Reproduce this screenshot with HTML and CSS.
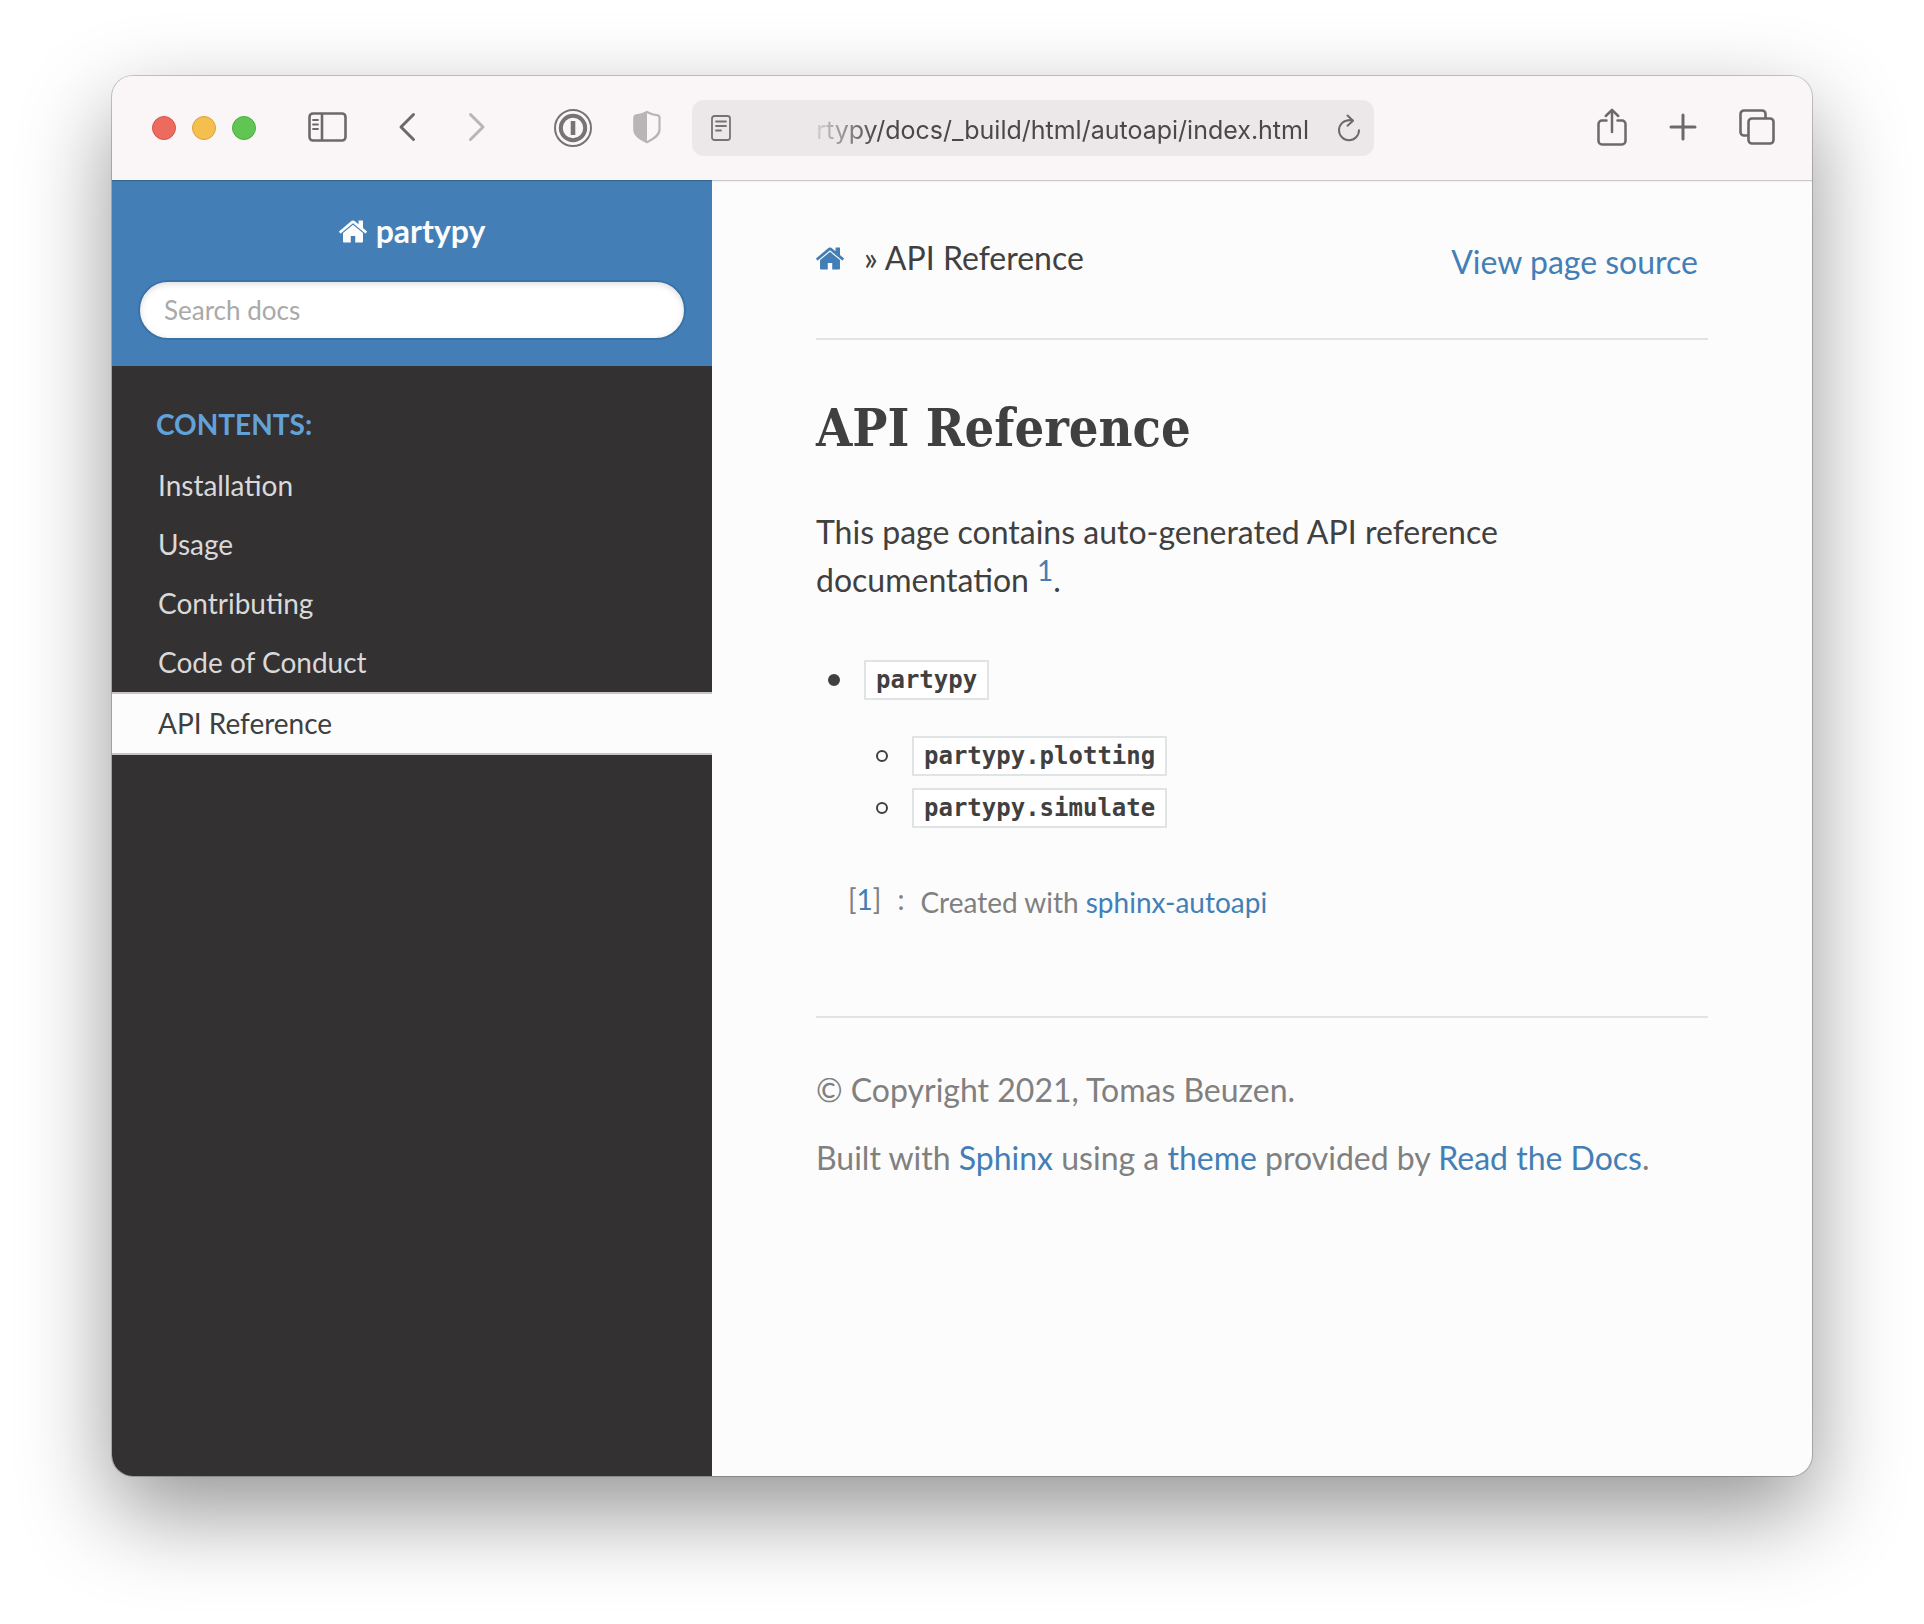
FILE: index.html
```html
<!DOCTYPE html>
<html lang="en">
<head>
<meta charset="utf-8">
<title>API Reference — partypy documentation</title>
<link rel="stylesheet" href="styles.css">
</head>
<body>
<svg class="defs" aria-hidden="true">
  <symbol id="home" viewBox="24 253 1616 1283">
    <path fill="currentColor" d="M1408 992v480q0 26-19 45t-45 19h-384v-384h-256v384h-384q-26 0-45-19t-19-45v-480q0-1 .5-3t.5-3l575-474 575 474q1 2 1 6zm223-69l-62 74q-8 9-21 11h-3q-13 0-21-7l-692-577-692 577q-12 8-24 7-13-2-21-11l-62-74q-8-10-7-23.5t11-21.5l719-599q32-26 76-26t76 26l244 204v-195q0-14 9-23t23-9h192q14 0 23 9t9 23v408l219 182q10 8 11 21.5t-7 23.5z"/>
  </symbol>
</svg>
<div class="window">
  <header class="toolbar">
    <div class="lights">
      <button class="light red" aria-label="Close"></button>
      <button class="light yellow" aria-label="Minimize"></button>
      <button class="light green" aria-label="Zoom"></button>
    </div>
    <button class="tool sidebar-toggle" aria-label="Show sidebar">
      <svg width="40" height="32" viewBox="0 0 40 32" fill="none" stroke="currentColor" stroke-width="2.6">
        <rect x="1.5" y="2.5" width="36" height="27" rx="3.5"/>
        <path d="M14 2.5v27"/>
        <path d="M5 9h5M5 13.500h5M5 18h5" stroke-width="1.8" stroke-linecap="round"/>
      </svg>
    </button>
    <div class="history">
      <button class="tool" aria-label="Back">
        <svg width="18" height="30" viewBox="0 0 18 30" fill="none" stroke="currentColor" stroke-width="3" stroke-linecap="round" stroke-linejoin="round"><path d="M15.500 2.500 3 15l12.500 12.500"/></svg>
      </button>
      <button class="tool faded" aria-label="Forward">
        <svg width="18" height="30" viewBox="0 0 18 30" fill="none" stroke="currentColor" stroke-width="3" stroke-linecap="round" stroke-linejoin="round"><path d="M2.500 2.500 15 15 2.500 27.500"/></svg>
      </button>
    </div>
    <div class="extensions">
      <button class="tool key" aria-label="Password manager">
        <svg width="38" height="38" viewBox="0 0 38 38" fill="none" stroke="currentColor">
          <circle cx="19" cy="19" r="18" stroke-width="2"/>
          <circle cx="19" cy="19" r="12.200" stroke-width="4"/>
          <path d="M19 12v14" stroke-width="4.600"/>
        </svg>
      </button>
      <button class="tool faded" aria-label="Privacy report">
        <svg width="28" height="34" viewBox="0 0 28 34">
          <path d="M14 1.800C10.500 4.200 6 4.900 3 5.300 2 5.500 1.500 6 1.500 7v12.500c0 6 6 9.500 12.500 12.700 6.500-3.200 12.500-6.700 12.500-12.700V7c0-1-.5-1.500-1.500-1.700-3-.4-7.500-1.100-11-3.500z" fill="none" stroke="currentColor" stroke-width="2.200" stroke-linejoin="round"/>
          <path d="M14 1C10 4 5 5 2 5.500 1 6 .5 6.500.5 8v12c0 6 7 10 13.500 13z" fill="currentColor"/>
        </svg>
      </button>
    </div>
    <div class="address">
      <svg width="20" height="26" viewBox="0 0 20 26" fill="none" stroke="currentColor" stroke-width="1.800" aria-hidden="true">
        <rect x="1" y="1" width="18" height="24" rx="2.500"/>
        <path d="M5 6.500h10M5 11h10M5 15.500h5" stroke-linecap="round"/>
      </svg>
      <input class="address-text" type="text" aria-label="Address" value="rtypy/docs/_build/html/autoapi/index.html">
      <button class="tool reload" aria-label="Reload">
        <svg width="24" height="28" viewBox="0 0 24 28" fill="none" stroke="currentColor" stroke-width="2" stroke-linecap="round" stroke-linejoin="round">
          <path d="M12 6.200h3.500"/><path d="M12 6.200A10 10 0 1 0 22 16.200"/><path d="M10.500 1.500 16 6.700l-5.500 5"/>
        </svg>
      </button>
    </div>
    <div class="actions">
      <button class="tool" aria-label="Share">
        <svg width="30" height="38" viewBox="0 0 30 38" fill="none" stroke="currentColor" stroke-width="2.500" stroke-linecap="round" stroke-linejoin="round">
          <path d="M9.500 12.500H5A3.500 3.500 0 0 0 1.500 16v17A3.500 3.500 0 0 0 5 36.500h20a3.500 3.500 0 0 0 3.500-3.500V16a3.500 3.500 0 0 0-3.500-3.500h-4.500"/>
          <path d="M15 24V2M8.800 8 15 1.800 21.200 8"/>
        </svg>
      </button>
      <button class="tool" aria-label="New tab">
        <svg width="28" height="28" viewBox="0 0 28 28" fill="none" stroke="currentColor" stroke-width="3" stroke-linecap="round"><path d="M14 2v24M2 14h24"/></svg>
      </button>
      <button class="tool" aria-label="Tab overview">
        <svg width="36" height="36" viewBox="0 0 36 36" fill="none" stroke="currentColor" stroke-width="2.600" stroke-linejoin="round">
          <rect x="9.500" y="9.500" width="25" height="25" rx="3.500"/>
          <path d="M9.500 26.500H5A3.500 3.500 0 0 1 1.500 23V5A3.500 3.500 0 0 1 5 1.500h18A3.500 3.500 0 0 1 26.500 5v4.500"/>
        </svg>
      </button>
    </div>
  </header>

  <div class="page">
    <aside class="side">
      <div class="side-head">
        <a class="brand" href="#"><svg class="home" aria-hidden="true"><use href="#home"/></svg>partypy</a>
        <input class="search" type="search" placeholder="Search docs" aria-label="Search docs">
      </div>
      <nav class="menu" aria-label="Contents">
        <p class="caption">CONTENTS:</p>
        <ul>
          <li><a href="#">Installation</a></li>
          <li><a href="#">Usage</a></li>
          <li><a href="#">Contributing</a></li>
          <li><a href="#">Code of Conduct</a></li>
          <li><a class="current" href="#" aria-current="page">API Reference</a></li>
        </ul>
      </nav>
    </aside>

    <main class="content">
      <div class="crumbs">
        <div class="trail"><a href="#" aria-label="Home"><svg class="home" aria-hidden="true"><use href="#home"/></svg></a><span>» API Reference</span></div>
        <a class="source" href="#">View page source</a>
      </div>
      <hr>
      <h1>API Reference</h1>
      <p>This page contains auto-generated API reference documentation <sup><a href="#note">1</a></sup>.</p>
      <ul class="modules">
        <li><code>partypy</code></li>
        <li class="nested">
          <ul>
            <li><code>partypy.plotting</code></li>
            <li><code>partypy.simulate</code></li>
          </ul>
        </li>
      </ul>
      <div class="footnote" id="note">
        <span class="label">[<a href="#">1</a>]</span>
        <span class="label">:</span>
        <span>Created with <a href="#">sphinx-autoapi</a></span>
      </div>
      <hr>
      <footer>
        <p>© Copyright 2021, Tomas Beuzen.</p>
        <p>Built with <a href="#">Sphinx</a> using a <a href="#">theme</a> provided by <a href="#">Read the Docs</a>.</p>
      </footer>
    </main>
  </div>
</div>
</body>
</html>
```
FILE: styles.css
```css
*, *::before { box-sizing: border-box; }

body {
  margin: 0;
  padding: 76px 112px 148px;
  min-height: 100vh;
  display: flex;
  background: #fff;
  color: #404040;
  font: 32px/48px Lato, "Liberation Sans", sans-serif;
}

a { color: #437fb6; text-decoration: none; }
p, ul, h1 { margin: 0; padding: 0; }
ul { list-style: none; }
button { padding: 0; border: 0; background: none; }
svg { display: block; }
.defs { position: absolute; width: 0; height: 0; }

.window {
  flex: 1;
  min-width: 0;
  display: flex;
  flex-direction: column;
  border-radius: 21px;
  overflow: hidden;
  background: #fcfcfc;
  box-shadow: 0 0 0 1px rgba(0, 0, 0, .2), 0 36px 90px rgba(0, 0, 0, .42);
}

/* Browser toolbar */
.toolbar {
  position: relative;
  z-index: 1;
  display: flex;
  align-items: center;
  height: 104px;
  padding: 0 37px 0 40px;
  background: #faf6f7;
  box-shadow: 0 1px 0 rgba(0, 0, 0, .16), 0 2px 0 rgba(0, 0, 0, .04);
}
.lights { display: flex; gap: 16px; }
.light { width: 24px; height: 24px; border-radius: 50%; border: 1px solid; }
.red { background: #ec6a5e; border-color: #d95448; }
.yellow { background: #f4bf4f; border-color: #d9a23b; }
.green { background: #61c554; border-color: #4ead3f; }
.tool { padding-bottom: 2px; color: #6d696a; }
.faded { color: #b9b5b6; }
.sidebar-toggle { margin-left: 52px; }
.history { display: flex; gap: 52px; margin-left: 50px; }
.extensions { display: flex; align-items: center; gap: 41px; margin-left: 68px; }
.key { padding: 0; color: #777374; }
.address {
  flex: 1;
  min-width: 0;
  display: flex;
  align-items: center;
  height: 56px;
  margin-left: 31px;
  padding: 0 13px 0 19px;
  border-radius: 12px;
  background: #ece8e9;
  color: #777374;
}
.address-text {
  flex: 1;
  min-width: 0;
  margin: 0 28px 0 75px;
  padding: 4px 0 0;
  border: 0;
  background: none;
  color: #4b4849;
  font: 25px/36px Inter, sans-serif;
  text-align: right;
  mask-image: linear-gradient(to right, transparent, #000 70px);
}
.reload { padding: 0; }
.actions { display: flex; align-items: center; gap: 42px; margin-left: 223px; }

/* Documentation page */
.page { flex: 1; display: flex; }

.side { width: 600px; background: #343132; }
.side-head {
  display: flex;
  flex-direction: column;
  align-items: center;
  gap: 25px;
  padding: 27px 26px 26px;
  background: #437fb6;
}
.brand {
  display: flex;
  align-items: center;
  gap: 9px;
  color: #fcfcfc;
  font-weight: 700;
}
.home { width: 28px; height: 23px; }
.search {
  width: 100%;
  height: 60px;
  padding: 0 24px;
  border: 2px solid #3a72a6;
  border-radius: 30px;
  background: #fff;
  box-shadow: inset 0 2px 6px #ddd;
  color: #404040;
  font: 26px/32px Lato, "Liberation Sans", sans-serif;
}
.search::placeholder { color: #a9a9a9; opacity: 1; }

.menu { padding-top: 26px; font-size: 28px; }
.caption {
  padding: 0 44px;
  color: #62a2d9;
  font-weight: 700;
  line-height: 64px;
}
.menu a {
  display: block;
  padding: 0 46px;
  color: #d9d9d9;
  line-height: 59px;
}
.menu .current {
  border-top: 2px solid #c9c5c6;
  border-bottom: 2px solid #c9c5c6;
  background: #fcfcfc;
  color: #404040;
}

.content { flex: 1; min-width: 0; padding: 54px 104px; }
.crumbs { display: flex; justify-content: space-between; align-items: flex-start; margin-bottom: 48px; }
.trail { display: flex; align-items: center; gap: 20px; }
.source { padding-right: 10px; line-height: 56px; }
hr { height: 2px; margin: 0; border: 0; background: #e1e4e5; }
h1 {
  margin: 56px 0 48px;
  font: 700 52px/64px "Roboto Slab", "DejaVu Serif Condensed", "DejaVu Serif", serif;
}
sup { font-size: 28px; line-height: 0; vertical-align: 11px; }

.modules { margin: 50px 0 44px; }
.modules li { display: flex; align-items: center; gap: 24px; height: 52px; padding-left: 12px; }
.modules li::before {
  content: "";
  width: 12px;
  height: 12px;
  border: 2px solid #404040;
  border-radius: 50%;
  background: #404040;
}
.modules ul li::before { background: none; }
.modules .nested { display: block; height: auto; padding: 24px 0 0 48px; }
.modules .nested::before { display: none; }
code {
  padding: 0 10px;
  border: 2px solid #e1e4e5;
  background: #fff;
  font: 700 24px/36px "DejaVu Sans Mono", monospace;
}

.footnote {
  display: flex;
  gap: 16px;
  margin-bottom: 90px;
  padding-left: 32px;
  color: #808080;
  font-size: 28px;
}
.footnote .label { line-height: 42px; }

footer { display: grid; gap: 20px; padding-top: 48px; color: #808080; }
```
